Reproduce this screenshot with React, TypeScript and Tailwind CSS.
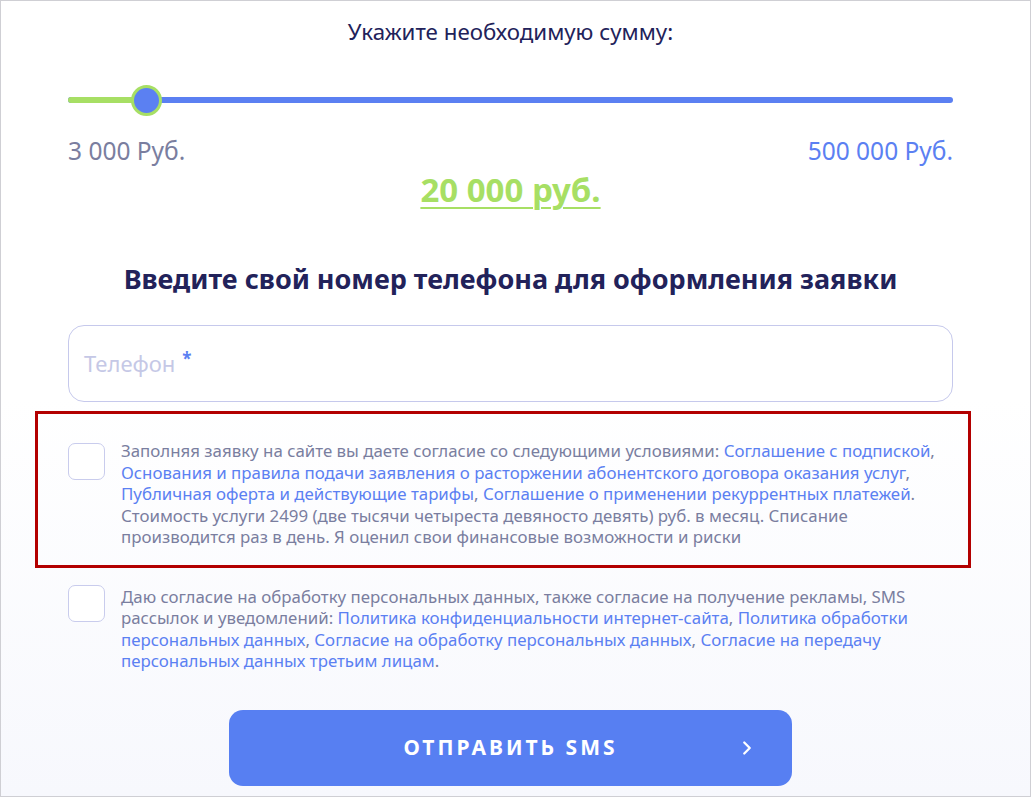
import { ChevronRight } from "lucide-react";

const link = "text-[#5b80f2]";

function Slider() {
  return (
    <div className="relative h-[32px] flex items-center">
      <div className="h-[6px] w-full rounded-full bg-[#5b80f2]" />
      <div className="absolute left-0 h-[6px] w-[78px] rounded-full bg-[#a7df64]" />
      <div className="absolute left-[63px] h-[31px] w-[31px] rounded-full border-[3px] border-[#a7df64] bg-[#5b80f2]" />
    </div>
  );
}

function Checkbox() {
  return <div className="h-[37px] w-[37px] shrink-0 rounded-[7px] border border-[#c9cced] bg-white" />;
}

export default function App() {
  return (
    <div
      className="h-[797px] w-[1031px] overflow-hidden border border-[#cfcfd4] bg-gradient-to-b from-white from-50% to-[#f7f8fd]"
      style={{ fontFamily: '"Noto Sans", sans-serif' }}
    >
      <div className="ml-[67px] flex w-[885px] flex-col">
        <h2 className="mt-[16px] text-center text-[22.3px] leading-[30px] text-[#22225a]">
          Укажите необходимую сумму:
        </h2>

        <div className="mt-[37px]">
          <Slider />
        </div>

        <div className="mt-[19px] flex justify-between text-[24.5px] leading-[32px]">
          <span className="text-[#7a7e9f]">3 000 Руб.</span>
          <span className="text-[#5b80f2]">500 000 Руб.</span>
        </div>

        <div className="mt-[2px] text-center">
          <span className="text-[33px] font-bold leading-[42px] text-[#a7df64] underline decoration-[2px] underline-offset-[5px]">
            20 000 руб.
          </span>
        </div>

        <h1 className="mt-[50px] text-center text-[27px] font-bold leading-[36px] text-[#22225a]">
          Введите свой номер телефона для оформления заявки
        </h1>

        <div className="mt-[28px] flex h-[77px] items-center rounded-[16px] border border-[#c6c9ec] bg-white px-[15px]">
          <span className="text-[22px] text-[#c5c8e6]">Телефон</span>
          <span className="ml-[7px] -mt-[10px] text-[17px] font-bold text-[#5b80f2]">*</span>
        </div>

        <div className="mt-[9px] -ml-[33px] -mr-[18px] flex gap-[16px] border-[3px] border-[#b30000] pb-[17px] pl-[30px] pr-[6px] pt-[26px]">
          <div className="pt-[3px]">
            <Checkbox />
          </div>
          <p className="whitespace-nowrap text-[16.85px] leading-[21.5px] text-[#7a7e9f]">
            Заполняя заявку на сайте вы даете согласие со следующими условиями:{" "}
            <a className={link}>Соглашение с подпиской</a>,<br />
            <a className={link}>Основания и правила подачи заявления о расторжении абонентского договора оказания услуг</a>,<br />
            <a className={link}>Публичная оферта и действующие тарифы</a>,{" "}
            <a className={link}>Соглашение о применении рекуррентных платежей</a>.<br />
            Стоимость услуги 2499 (две тысячи четыреста девяносто девять) руб. в месяц. Списание<br />
            производится раз в день. Я оценил свои финансовые возможности и риски
          </p>
        </div>

        <div className="mt-[14px] flex gap-[16px]">
          <div className="pt-[3px]">
            <Checkbox />
          </div>
          <p className="whitespace-nowrap pt-[4px] text-[16.85px] leading-[21.5px] text-[#7a7e9f]">
            Даю согласие на обработку персональных данных, также согласие на получение рекламы, SMS<br />
            рассылок и уведомлений: <a className={link}>Политика конфиденциальности интернет-сайта</a>,{" "}
            <a className={link}>Политика обработки</a>
            <br />
            <a className={link}>персональных данных</a>,{" "}
            <a className={link}>Согласие на обработку персональных данных</a>,{" "}
            <a className={link}>Согласие на передачу</a>
            <br />
            <a className={link}>персональных данных третьим лицам</a>.
          </p>
        </div>

        <div className="mt-[38px] flex justify-center">
          <button className="relative flex h-[76px] w-[563px] items-center justify-center rounded-[14px] bg-[#577ff2] text-[21px] font-bold tracking-[3px] text-white">
            ОТПРАВИТЬ SMS
            <ChevronRight className="absolute right-[34px] h-[22px] w-[22px]" strokeWidth={2.5} />
          </button>
        </div>
      </div>
    </div>
  );
}
